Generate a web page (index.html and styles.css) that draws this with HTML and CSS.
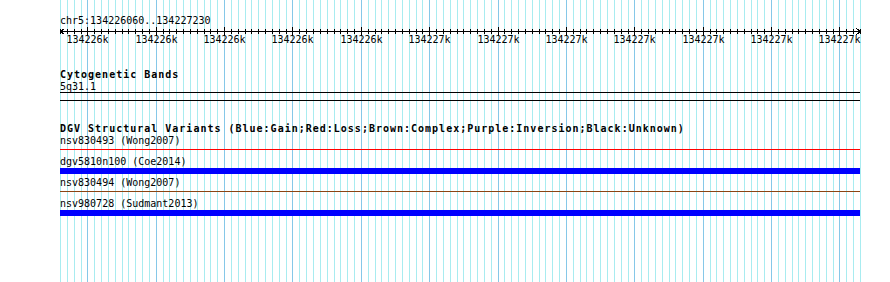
FILE: index.html
```html
<!DOCTYPE html>
<html lang="en">
  <head>
    <meta charset="UTF-8" />
    <meta name="viewport" content="width=device-width, initial-scale=1.0" />
    <title>chr5:134226060..134227230</title>
    <link rel="stylesheet" href="styles.css">
  </head>
  <body>
    <div class="panel">
      <svg class="grid" id="grid" width="890" height="282"></svg>

      <div class="tracks">
        <div class="locus">chr5:134226060..134227230</div>
        <svg class="ruler" id="ruler" width="800" height="20">
          <line class="axis" x1="0" y1="5.5" x2="800" y2="5.5" />
          <polyline class="axis" points="4.5,2.5 0.5,5.5 4.5,8.5" />
          <polyline class="axis" points="796.5,2.5 800.5,5.5 796.5,8.5" />
        </svg>

        <div class="track bands">
          <div class="track-title">Cytogenetic Bands</div>
          <div class="label">5q31.1</div>
          <div class="band"></div>
        </div>

        <div class="track dgv">
          <div class="track-title">DGV Structural Variants (Blue:Gain;Red:Loss;Brown:Complex;Purple:Inversion;Black:Unknown)</div>
          <div class="feature">
            <div class="label">nsv830493 (Wong2007)</div>
            <div class="glyph loss"></div>
          </div>
          <div class="feature">
            <div class="label">dgv5810n100 (Coe2014)</div>
            <div class="glyph gain"></div>
          </div>
          <div class="feature">
            <div class="label">nsv830494 (Wong2007)</div>
            <div class="glyph complex"></div>
          </div>
          <div class="feature">
            <div class="label">nsv980728 (Sudmant2013)</div>
            <div class="glyph gain"></div>
          </div>
        </div>
      </div>
    </div>

    <script>
      const SVG_NS = "http://www.w3.org/2000/svg";
      const grid = document.getElementById("grid");
      const ruler = document.getElementById("ruler");

      const start = 134226060;
      const end = 134227230;
      const scale = 800 / (end - start);

      function addLine(parent, x1, y1, x2, y2, cls) {
        const el = document.createElementNS(SVG_NS, "line");
        el.setAttribute("x1", x1);
        el.setAttribute("y1", y1);
        el.setAttribute("x2", x2);
        el.setAttribute("y2", y2);
        el.setAttribute("class", cls);
        parent.appendChild(el);
      }

      // labels round half to even, like perl's sprintf
      function kiloLabel(bp) {
        const k = bp / 1000;
        const low = Math.floor(k);
        if (k - low === 0.5) return (low % 2 === 0 ? low : low + 1) + "k";
        return Math.round(k) + "k";
      }

      for (let bp = start; bp <= end; bp += 10) {
        const x = Math.round((bp - start) * scale) + 0.5;
        const major = bp % 100 === 0;

        addLine(grid, 60 + x, 0, 60 + x, 282, major ? "major" : "minor");
        addLine(ruler, x, major ? 1 : 3, x, major ? 10 : 8, "tick");

        if (major) {
          const text = document.createElementNS(SVG_NS, "text");
          text.setAttribute("x", x);
          text.setAttribute("y", 17);
          text.textContent = kiloLabel(bp);
          ruler.appendChild(text);
        }
      }
    </script>
  </body>
</html>
```

FILE: styles.css
```css
* {
  margin: 0;
  padding: 0;
  box-sizing: border-box;
}

body {
  font-family: "DejaVu Sans Mono", monospace;
  font-size: 10px;
  line-height: 12px;
  color: #000;
  background-color: #fff;
}

.panel {
  position: relative;
  width: 890px;
  height: 282px;
  overflow: hidden;
}

.grid {
  position: absolute;
  top: 0;
  left: 0;
  shape-rendering: crispEdges;
}

.grid .minor {
  stroke: #a8ecf0;
  stroke-width: 1;
}

.grid .major {
  stroke: #86c8e8;
  stroke-width: 1;
}

.tracks {
  position: relative;
  width: 860px;
  padding: 14px 0 0 60px;
}

/* text rows keep a 12px box, the taller line box sets the baseline 1px lower */
.locus,
.label,
.track-title {
  height: 12px;
  line-height: 14px;
  white-space: nowrap;
}

.ruler {
  display: block;
  overflow: visible;
  shape-rendering: crispEdges;
}

.ruler .axis,
.ruler .tick {
  stroke: #000;
  stroke-width: 1;
  fill: none;
}

.ruler text {
  font-family: "DejaVu Sans Mono", monospace;
  font-size: 10px;
  text-anchor: middle;
  fill: #000;
}

.track-title {
  font-weight: bold;
  letter-spacing: 1px;
}

.bands {
  margin-top: 22px;
}

.band {
  width: 800px;
  height: 9px;
  border-top: 1px solid #000;
  border-bottom: 1px solid #000;
}

.dgv {
  margin-top: 21px;
}

.feature + .feature {
  margin-top: 2px;
}

.glyph {
  width: 800px;
  height: 6px;
  margin-top: 1px;
}

.glyph.gain {
  background-color: #0000ff;
}

.glyph.loss {
  background: linear-gradient(#ff0000, #ff0000) 0 2px / 100% 1px no-repeat;
}

.glyph.complex {
  background: linear-gradient(#8b4513, #8b4513) 0 2px / 100% 1px no-repeat;
}
```
